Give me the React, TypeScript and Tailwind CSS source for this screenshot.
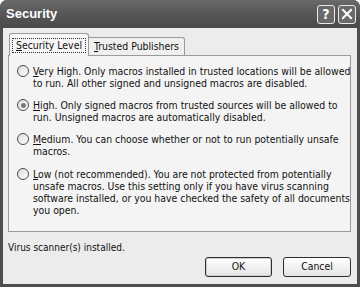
import React from "react";

const font = { fontFamily: '"DejaVu Sans Condensed", "Liberation Sans", Arial, sans-serif' };

function Radio({ checked }: { checked?: boolean }) {
  return (
    <div className="w-[12px] h-[12px] shrink-0 rounded-full border border-[#4a4a4a] bg-gradient-to-br from-[#dcdcdc] to-[#ffffff] flex items-center justify-center mt-[0px]">
      {checked && <div className="w-[5px] h-[5px] rounded-full bg-[#7a7a7a]" />}
    </div>
  );
}

function Option({ checked, lines }: { checked?: boolean; lines: React.ReactNode[] }) {
  return (
    <div className="flex gap-[4px] items-start">
      <Radio checked={checked} />
      <div className="flex flex-col text-[10.4px] leading-[12px] text-[#111]">
        {lines.map((l, i) => (
          <div key={i} className="whitespace-nowrap">{l}</div>
        ))}
      </div>
    </div>
  );
}

export default function App() {
  return (
    <div style={font} className="w-[360px] h-[287px] bg-[#4e4e4e] rounded-t-[7px] flex flex-col overflow-hidden">
      <div className="h-[28px] flex items-center justify-between pl-[6px] pr-[4px] bg-gradient-to-b from-[#6a6a6a] via-[#565656] to-[#4a4a4a]">
        <div className="text-white font-bold text-[13px]" style={{ fontFamily: '"Liberation Sans", Arial, sans-serif' }}>Security</div>
        <div className="flex gap-[3px]">
          <div className="w-[18px] h-[19px] rounded-[3px] border border-[#e8e8e8] bg-[#6a6a6a] flex items-center justify-center text-white font-bold text-[14px]">?</div>
          <div className="w-[18px] h-[19px] rounded-[3px] border border-[#e8e8e8] bg-[#6a6a6a] flex items-center justify-center">
            <svg width="12" height="12" viewBox="0 0 12 12">
              <path d="M2 2 L10 10 M10 2 L2 10" stroke="#fff" strokeWidth="2" strokeLinecap="square" />
            </svg>
          </div>
        </div>
      </div>
      <div className="flex-1 mx-[3px] mb-[3px] bg-[#ececec] flex flex-col px-[5px] pt-[5px]">
        <div className="flex items-end h-[22px] relative z-10">
          <div className="ml-[1px] w-[80px] h-[23px] mb-[-1px] border border-b-0 border-[#9a9a9a] rounded-t-[3px] bg-[#f6f6f6] flex items-center justify-center text-[10.4px] text-[#111]">
            <span className="border border-dotted border-[#333] px-[3px] leading-[13px]"><u>S</u>ecurity Level</span>
          </div>
          <div className="w-[96px] h-[18px] border border-l-0 border-b-0 border-[#9a9a9a] rounded-tr-[3px] bg-[#efefef] flex items-center justify-center text-[10.4px] text-[#111]">
            <span><u>T</u>rusted Publishers</span>
          </div>
        </div>
        <div className="w-[343px] h-[177px] border border-[#9a9a9a] bg-[#f4f4f4] flex flex-col gap-[10px] pl-[8px] pt-[9px]">
          <Option lines={[<><u>V</u>ery High. Only macros installed in trusted locations will be allowed</>, "to run. All other signed and unsigned macros are disabled."]} />
          <Option checked lines={[<><u>H</u>igh. Only signed macros from trusted sources will be allowed to</>, "run. Unsigned macros are automatically disabled."]} />
          <Option lines={[<><u>M</u>edium. You can choose whether or not to run potentially unsafe</>, "macros."]} />
          <div className="mt-[1px]">
            <Option lines={[<><u>L</u>ow (not recommended). You are not protected from potentially</>, "unsafe macros. Use this setting only if you have virus scanning", "software installed, or you have checked the safety of all documents", "you open."]} />
          </div>
        </div>
        <div className="mt-[10px] text-[10px] leading-[12px] text-[#111]">Virus scanner(s) installed.</div>
        <div className="mt-[3px] flex justify-end gap-[11px] pr-[1px]">
          <button className="w-[67px] h-[20px] rounded-[3px] border border-[#2e2e2e] bg-gradient-to-b from-[#ffffff] to-[#e4e4e4] shadow-[inset_0_0_0_1px_#cfcfcf] text-[10.4px] text-[#111]">OK</button>
          <button className="w-[68px] h-[20px] rounded-[3px] border border-[#2e2e2e] bg-gradient-to-b from-[#ffffff] to-[#e4e4e4] text-[10.4px] text-[#111]">Cancel</button>
        </div>
      </div>
    </div>
  );
}
